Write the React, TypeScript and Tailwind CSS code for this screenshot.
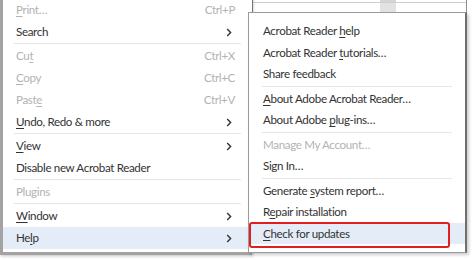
import React from "react";

type Item =
  | { sep: true }
  | {
      sep?: false;
      label: React.ReactNode;
      shortcut?: string;
      sub?: boolean;
      disabled?: boolean;
      active?: boolean;
    };

// underline the mnemonic letter
function U({ children }: { children: React.ReactNode }) {
  return <span className="underline underline-offset-2 decoration-1">{children}</span>;
}

function Chevron() {
  return (
    <svg width="6" height="9" viewBox="0 0 6 9" className="shrink-0">
      <path d="M1.2 1 L4.6 4.5 L1.2 8" fill="none" stroke="#3a3a3a" strokeWidth="1.5" />
    </svg>
  );
}

const mainItems: Item[] = [
  { label: <><U>P</U>rint…</>, shortcut: "Ctrl+P", disabled: true },
  { label: "Search", sub: true },
  { sep: true },
  { label: <>Cu<U>t</U></>, shortcut: "Ctrl+X", disabled: true },
  { label: <><U>C</U>opy</>, shortcut: "Ctrl+C", disabled: true },
  { label: <>Past<U>e</U></>, shortcut: "Ctrl+V", disabled: true },
  { label: <><U>U</U>ndo, Redo &amp; more</>, sub: true },
  { sep: true },
  { label: <><U>V</U>iew</>, sub: true },
  { label: "Disable new Acrobat Reader" },
  { sep: true },
  { label: "Plugins", disabled: true },
  { sep: true },
  { label: <><U>W</U>indow</>, sub: true },
  { label: <>He<U>l</U>p</>, sub: true, active: true },
];

const helpItems: Item[] = [
  { label: <>Acrobat Reader <U>h</U>elp</> },
  { label: <>Acrobat Reader <U>t</U>utorials…</> },
  { label: "Share feedback" },
  { sep: true },
  { label: <><U>A</U>bout Adobe Acrobat Reader…</> },
  { label: <>About Adobe <U>p</U>lug-ins…</> },
  { sep: true },
  { label: "Manage My Account…", disabled: true },
  { label: "Sign In…" },
  { sep: true },
  { label: <>Generate <U>s</U>ystem report…</> },
  { label: <>R<U>e</U>pair installation</> },
  { label: <><U>C</U>heck for updates</>, active: true },
];

export default function App() {
  return (
    <div className="relative w-[474px] h-[260px] overflow-hidden bg-white font-['Lato','Noto_Sans',sans-serif] text-[11.6px] tracking-[-0.35px] text-[#333333]">
      {/* window strip behind the submenu */}
      <div className="absolute left-[252px] top-[-2px] w-[215px] h-[15px] bg-white border-x border-[#8c8c8c] flex flex-col">
        <div className="h-[5px] border-b border-[#cfcfcf] flex">
          <div className="ml-[127px] w-[16px] h-full bg-[#d4d4d4]" />
        </div>
        <div className="flex-1 flex">
          <div className="ml-[127px] w-[16px] h-full bg-[#e2e2e2]" />
        </div>
      </div>

      {/* main context menu */}
      <div className="absolute left-0 top-[-5px] w-[252px] pt-[4px] pb-[3px] bg-white border-l-[3px] border-b-[3px] border-[#a3a3a3] shadow-[1px_1px_3px_rgba(0,0,0,0.25)]">
        {mainItems.map((it, i) =>
          it.sep ? (
            <div key={i} className="h-[2px] pb-px px-[11px]">
              <div className="h-px bg-[#e6e6e6]" />
            </div>
          ) : (
            <div
              key={i}
              className={`h-[22px] flex items-center pl-[13px] pr-[20px] ${
                it.active ? "bg-[#e4edf7]" : ""
              } ${it.disabled ? "text-[#b3b3b3]" : ""}`}
            >
              <span className="flex-1 whitespace-nowrap">{it.label}</span>
              {it.shortcut && <span className="text-[#b3b3b3] mr-[-3px]">{it.shortcut}</span>}
              {it.sub && <Chevron />}
            </div>
          )
        )}
      </div>

      {/* help submenu */}
      <div className="absolute left-[248px] top-[12px] w-[219px] h-[241px] pt-[7px] bg-white border border-[#9a9a9a] border-r-[2px] border-r-[#6f6f6f] shadow-[2px_2px_3px_rgba(0,0,0,0.2)]">
        {helpItems.map((it, i) =>
          it.sep ? (
            <div key={i} className="h-[3px] flex items-center px-[13px]">
              <div className="h-px w-full bg-[#e6e6e6]" />
            </div>
          ) : (
            <div
              key={i}
              className={`h-[21.5px] flex items-center pl-[14px] ${
                it.active ? "bg-[#e4edf7]" : ""
              } ${it.disabled ? "text-[#b3b3b3]" : ""}`}
            >
              <span className="whitespace-nowrap">{it.label}</span>
            </div>
          )
        )}
      </div>

      {/* red highlight annotation */}
      <div className="absolute left-[249px] top-[222px] w-[201px] h-[26px] border-2 border-[#e02020] rounded-[3px]" />
    </div>
  );
}
